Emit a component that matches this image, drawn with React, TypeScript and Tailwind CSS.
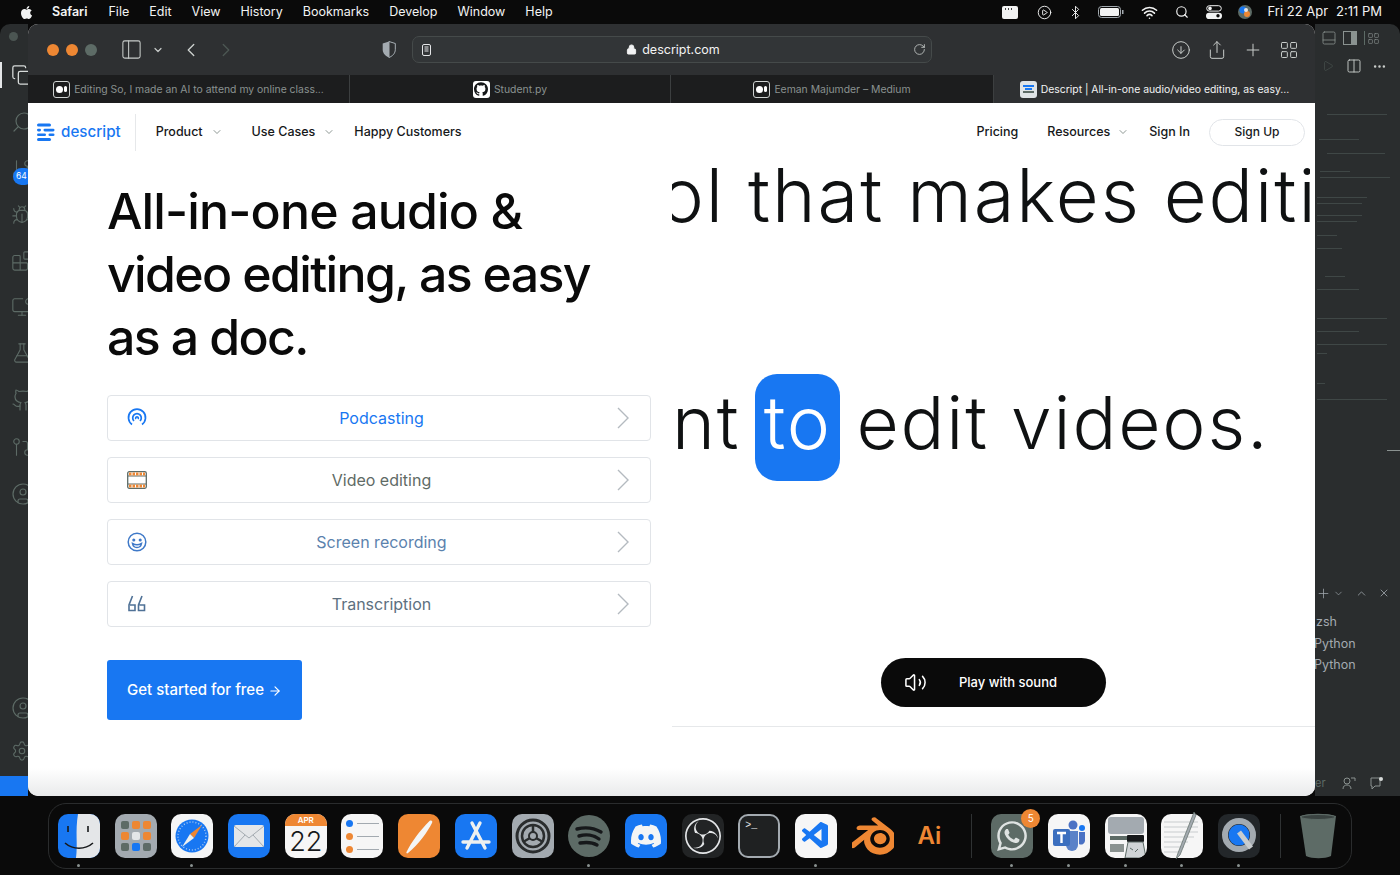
import React from "react";
import { ChevronDown, ChevronLeft, ChevronRight, ChevronUp, Lock, RotateCw, ArrowDownCircle, Share, Plus, LayoutGrid, PanelLeft, Copy, Search, GitBranch, Bug, Blocks, MonitorDot, FlaskConical, Github, GitPullRequest, CircleUser, Settings, X, Play, Columns2, Ellipsis, PanelBottom, Volume2, Search as Mag, Wifi, Bluetooth, CirclePlay, ArrowRight } from "lucide-react";
import { FaApple, FaWhatsapp } from "react-icons/fa";
import { SiDiscord, SiObsstudio, SiBlender, SiGithub } from "react-icons/si";
import { VscVscode } from "react-icons/vsc";

const BLUE = "#1877f2";

function DescriptMark({ size = 18 }: { size?: number }) {
  return (
    <svg width={size} height={size} viewBox="0 0 18 18">
      <g fill="#1877f2">
        <rect x="0" y="0.5" width="14" height="3" rx="1.5" />
        <rect x="0" y="5.800" width="4" height="2.600" rx="1.300" />
        <rect x="6.500" y="5.800" width="11" height="2.600" rx="1.300" />
        <rect x="0" y="10.500" width="9" height="2.600" rx="1.300" />
        <rect x="11.500" y="10.500" width="6" height="2.600" rx="1.300" />
        <rect x="0" y="15" width="14" height="3" rx="1.500" />
      </g>
    </svg>
  );
}

function MediumFav() {
  return (
    <span className="flex h-[17px] w-[17px] items-center justify-center gap-[1px] rounded-[3px] border border-[#cfd3d2] bg-[#1c1d1e]">
      <span className="h-[7px] w-[7px] rounded-full bg-white" />
      <span className="h-[6px] w-[3px] rounded-full bg-white" />
    </span>
  );
}

function Tab({ w, active, icon, label, border = true }: { w: string; active?: boolean; icon: React.ReactNode; label: string; border?: boolean }) {
  return (
    <div className={`${w} flex h-full items-center justify-center gap-1 ${active ? "bg-[#2e3032] text-[#f2f3f3]" : "text-[#8a9290]"} ${border ? "border-r border-[#3c3f40]" : ""}`}>
      {icon}
      <span className="pt-[1px] text-[10.4px] whitespace-nowrap">{label}</span>
    </div>
  );
}

function Row({ icon, label, color }: { icon: React.ReactNode; label: string; color: string }) {
  return (
    <div className="flex h-[46px] w-[544px] items-center rounded-[4px] border border-[#e1e4e8] pl-[19px] pr-5">
      <span className="flex h-5 w-5 items-center justify-center">{icon}</span>
      <span className={`flex-1 text-center text-[16px] ${color}`}>{label}</span>
      <svg width="14" height="24" viewBox="0 0 14 24" fill="none" stroke="#b4bac0" strokeWidth="1.4"><path d="M2 2l10 10L2 22" /></svg>
    </div>
  );
}

function DockTile({ bg = "", children, dot = false }: { bg?: string; children: React.ReactNode; dot?: boolean }) {
  return (
    <div className="relative h-[44px] w-[42px] shrink-0">
      <div className={`flex h-full w-full items-center justify-center overflow-hidden rounded-[10px] ${bg}`}>{children}</div>
      {dot && <span className="absolute -bottom-[9px] left-[19px] h-[3px] w-[3px] rounded-full bg-[#8a9290]" />}
    </div>
  );
}

function Dock() {
  return (
    <div className="flex h-[66px] w-[1304px] items-center rounded-[18px] border border-[#2a2c2d] pl-[9px]">
      <div className="flex items-center gap-[14.7px]">
        <DockTile dot bg="bg-[#1877f2]">
          <svg width="42" height="44" viewBox="0 0 42 44">
            <path d="M20 0H42V44H18C20 30 17 18 20 0Z" fill="#e4e6e8" />
            <path d="M10 12v6M30 12v6" stroke="#16181a" strokeWidth="1.6" />
            <path d="M7 29c8 7 20 7 28 0" stroke="#16181a" strokeWidth="1.6" fill="none" />
          </svg>
        </DockTile>
        <DockTile bg="bg-[#a3aab0]">
          <div className="grid grid-cols-3 gap-[3px]">
            {["#5d6b66", "#ee8733", "#ee8733", "#ee8733", "#e4e6e8", "#ee8733", "#5d6b66", "#1877f2", "#5d6b66"].map((c, i) => (
              <span key={i} className="h-[8px] w-[8px] rounded-[2px]" style={{ backgroundColor: c }} />
            ))}
          </div>
        </DockTile>
        <DockTile dot bg="bg-[#f4f5f5]">
          <svg width="36" height="36" viewBox="0 0 36 36">
            <circle cx="18" cy="18" r="16.500" fill="#1877f2" />
            <circle cx="18" cy="18" r="14" fill="none" stroke="#a8c8f0" strokeWidth="1.500" strokeDasharray="1 2" />
            <path d="M28 7L20 20 16 16Z" fill="#ee8733" />
            <path d="M8 29l8-13 4 4Z" fill="#eef0f0" />
          </svg>
        </DockTile>
        <DockTile bg="bg-[#1877f2]">
          <svg width="32" height="24" viewBox="0 0 32 24">
            <rect x="1" y="1" width="30" height="22" rx="2" fill="#e4e6e8" />
            <path d="M1 2l15 12L31 2M1 23l11-12M31 23L20 11" stroke="#a3aab0" fill="none" />
          </svg>
        </DockTile>
        <DockTile bg="bg-[#f6f6f6]">
          <div className="flex h-full w-full flex-col items-center">
            <div className="flex h-[12px] w-full items-center justify-center bg-[#ee8733] text-[8px] font-semibold text-white">APR</div>
            <div className="text-[27px] leading-[32px] font-light text-[#16181a]">22</div>
          </div>
        </DockTile>
        <DockTile bg="bg-[#f6f6f6]">
          <div className="flex flex-col gap-[6px]">
            {["#1877f2", "#ee8733", "#ee8733"].map((c, i) => (
              <div key={i} className="flex items-center gap-[4px]">
                <span className="h-[7px] w-[7px] rounded-full" style={{ backgroundColor: c }} />
                <span className="h-[1px] w-[22px] bg-[#a3aab0]" />
              </div>
            ))}
          </div>
        </DockTile>
        <DockTile bg="bg-[#ee8733]">
          <svg width="42" height="44" viewBox="0 0 42 44"><path d="M34 9c-4 8-13 21-24 30-1 1-2 0-1.500-1 5-10 13-21 23-31 2-1 3.500 0 2.500 2Z" fill="#f4f5f5" /></svg>
        </DockTile>
        <DockTile bg="bg-[#1877f2]">
          <svg width="36" height="36" viewBox="0 0 36 36" stroke="#eef0f0" strokeWidth="3.400" strokeLinecap="round"><path d="M22 5L9 30M14 5l13 25M5 24h26" /></svg>
        </DockTile>
        <DockTile bg="bg-[#a3aab0]">
          <svg width="38" height="38" viewBox="0 0 38 38" fill="none" stroke="#2a2d2e">
            <circle cx="19" cy="19" r="16" strokeWidth="3" />
            <circle cx="19" cy="19" r="11" strokeWidth="2.500" />
            <circle cx="19" cy="19" r="4" strokeWidth="2" />
            <path d="M19 8v7M9 25l7-4M29 25l-7-4" strokeWidth="2.500" />
          </svg>
        </DockTile>
        <DockTile dot>
          <svg width="42" height="44" viewBox="0 0 42 44">
            <circle cx="21" cy="22" r="21" fill="#5d6b66" />
            <g fill="none" stroke="#16181a" strokeWidth="3.400" strokeLinecap="round">
              <path d="M9 15c8-2 17-1 24 3" />
              <path d="M11 22c7-2 15-1 20 3" />
              <path d="M12 29c6-1 12-1 17 2" />
            </g>
          </svg>
        </DockTile>
        <DockTile bg="bg-[#1877f2]"><SiDiscord size={30} color="#f4f5f5" /></DockTile>
        <DockTile bg="bg-[#222425]"><SiObsstudio size={36} color="#e4e6e8" /></DockTile>
        <DockTile bg="bg-[#1f2122] border-2 border-[#a3aab0]">
          <div className="h-full w-full px-[5px] pt-[5px] font-['Liberation_Mono',monospace] text-[10px] leading-[10px] text-[#e4e6e8]">&gt;_</div>
        </DockTile>
        <DockTile dot bg="bg-[#f6f6f6]"><VscVscode size={32} color={BLUE} /></DockTile>
        <DockTile><SiBlender size={46} color="#ee8733" className="shrink-0" /></DockTile>
        <DockTile><span className="font-['Inter',sans-serif] text-[24px] font-semibold text-[#ee8733]">Ai</span></DockTile>
      </div>
      <span className="ml-[21px] mr-[19px] h-[44px] w-px bg-[#2f3233]" />
      <div className="flex items-center gap-[14.7px]">
        <div className="relative">
          <DockTile dot bg="bg-[#5d6b66]"><FaWhatsapp size={34} color="#dfe3e2" /></DockTile>
          <span className="absolute -top-[5px] -right-[7px] flex h-[19px] w-[19px] items-center justify-center rounded-full bg-[#ee8733] text-[10px] text-white">5</span>
        </div>
        <DockTile dot bg="bg-[#f6f6f6]">
          <svg width="34" height="34" viewBox="0 0 34 34">
            <circle cx="21" cy="6" r="4.500" fill="#4b72c4" />
            <circle cx="30" cy="9" r="3" fill="#1877f2" />
            <path d="M15 12h11v14a6 6 0 01-12 0Z" fill="#5b82c8" />
            <path d="M27 13h6v9a4 4 0 01-6 3Z" fill="#4b72c4" />
            <rect x="1" y="10" width="17" height="17" rx="2" fill="#3b6fbf" />
            <path d="M5 14h9M9.500 14v10" stroke="#fff" strokeWidth="2.400" />
          </svg>
        </DockTile>
        <DockTile dot bg="bg-[#f6f6f6]">
          <svg width="42" height="44" viewBox="0 0 42 44">
            <rect x="3" y="3" width="36" height="17" rx="3" fill="#a3aab0" />
            <rect x="5" y="22" width="18" height="4" fill="#5d6b66" />
            <rect x="5" y="30" width="14" height="8" fill="#8a9290" />
            <rect x="22" y="21" width="17" height="7" rx="1" fill="#16181a" />
            <path d="M23 28h15l3 16H20Z" fill="#d0d4d6" stroke="#5d6b66" />
            <path d="M25 34l3 2M30 38l3-3" stroke="#5d6b66" />
          </svg>
        </DockTile>
        <div className="relative">
          <DockTile dot bg="bg-[#f6f6f6]">
            <svg width="42" height="44" viewBox="0 0 42 44">
              <path d="M3 8h34M3 13h34M3 18h34M3 23h30M3 28h24M3 33h20M3 38h16" stroke="#c8ccce" />
            </svg>
          </DockTile>
          <svg width="22" height="50" viewBox="0 0 22 50" className="absolute -top-[3px] left-[14px]">
            <path d="M19 1L3 42 1 48 5 44 21 4Z" fill="#a3aab0" stroke="#5d6b66" strokeWidth=".7" />
          </svg>
        </div>
        <DockTile dot bg="bg-[#23272a]">
          <svg width="40" height="42" viewBox="0 0 40 42" fill="none">
            <circle cx="20" cy="20" r="14" stroke="#a3aab0" strokeWidth="6" />
            <circle cx="20" cy="20" r="10.500" fill={BLUE} />
            <path d="M20 17l12 16" stroke="#c8ccce" strokeWidth="5" />
          </svg>
        </DockTile>
      </div>
      <span className="ml-[20px] mr-[19px] h-[44px] w-px bg-[#2f3233]" />
      <svg width="36" height="46" viewBox="0 0 36 46">
        <path d="M0 3c10-3 26-3 36 0l-5 40c-6 3-19 3-25 0Z" fill="#5d6b66" />
        <ellipse cx="18" cy="4" rx="17" ry="2.500" fill="#3a4341" stroke="#5d6b66" />
      </svg>
    </div>
  );
}

const codeLines: [number, number, number][] = [
  [40, 12, 60], [24, 4, 40], [13, 12, 58], [17, 5, 30], [5, 5, 70], [19, 2, 50], [5, 2, 45], [11, 2, 45],
  [5, 2, 40], [13, 2, 20], [12, 2, 25], [27, 10, 20], [12, 2, 42], [28, 2, 70], [12, 2, 42], [12, 2, 70],
  [8, 2, 10], [29, 2, 8], [15, 2, 70],
];

export default function App() {
  return (
    <div className="flex h-[875px] w-[1400px] flex-col overflow-hidden bg-[#0a0a0a] font-['Inter',sans-serif]">
      {/* Menu bar */}
      <div className="flex h-6 shrink-0 items-center justify-between pl-[19px] pr-[18px] text-[12.5px] text-[#f2f3f3]">
        <div className="flex items-center">
          <FaApple size={15} className="mr-[18px]" />
          <span className="mr-[21px] font-semibold">Safari</span>
          <div className="flex gap-[20px]">
            <span>File</span><span>Edit</span><span>View</span><span>History</span><span>Bookmarks</span><span>Develop</span><span>Window</span><span>Help</span>
          </div>
        </div>
        <div className="flex items-center">
          <svg width="16" height="13" viewBox="0 0 16 13" className="mr-[19px]"><rect width="16" height="13" rx="2" fill="#f2f3f3" /><path d="M3 3h1M6 3h1M9 3h1" stroke="#0a0a0a" strokeWidth="1.500" /></svg>
          <CirclePlay size={15} strokeWidth={1.500} className="mr-[16px]" />
          <Bluetooth size={15} strokeWidth={1.500} className="mr-[15px]" />
          <svg width="26" height="12" viewBox="0 0 26 12" className="mr-[17px]"><rect x=".5" y=".5" width="22" height="11" rx="3" fill="none" stroke="#a3aab0" /><rect x="2" y="2" width="19" height="8" rx="1.500" fill="#f2f3f3" /><rect x="24" y="4" width="1.500" height="4" fill="#a3aab0" /></svg>
          <Wifi size={17} strokeWidth={2.200} className="mr-[17px]" />
          <Mag size={14} strokeWidth={2} className="mr-[17px]" />
          <svg width="16" height="14" viewBox="0 0 16 14" className="mr-[16px]"><rect x=".7" y=".7" width="14.600" height="5.400" rx="2.700" fill="none" stroke="#f2f3f3" /><circle cx="4" cy="3.400" r="1.800" fill="#f2f3f3" /><rect y="7.700" width="16" height="6.300" rx="3.100" fill="#f2f3f3" /><circle cx="12" cy="10.800" r="1.700" fill="#0a0a0a" /></svg>
          <svg width="14" height="14" viewBox="0 0 14 14" className="mr-[16px]"><circle cx="7" cy="7" r="7" fill="#5d6b66" /><circle cx="5" cy="5" r="3.500" fill="#1877f2" /><circle cx="9" cy="9" r="3" fill="#ee8733" /><circle cx="8" cy="5" r="2" fill="#e4e6e8" /></svg>
          <span className="mr-[8px] text-[13px]">Fri 22 Apr</span>
          <span className="text-[13px]">2:11 PM</span>
        </div>
      </div>

      {/* Desktop */}
      <div className="flex h-[772px] shrink-0">
        {/* VS Code left rail */}
        <div className="relative flex w-[28px] shrink-0 flex-col items-start overflow-hidden rounded-tl-[10px] bg-[#2a2d2e] text-[#5d6b66]">
          <span className="absolute left-0 top-[38px] h-[26px] w-[2px] bg-[#e4e6e8]" />
          <div className="flex h-[40px] w-full shrink-0 items-start pl-[9px] pt-[8px]"><span className="h-[9px] w-[9px] rounded-full bg-[#4b5552]" /></div>
          <div className="flex flex-col gap-[24px] pl-[11px]">
            <Copy size={22} strokeWidth={1.400} className="shrink-0 text-[#d7dbda]" />
            <Search size={24} strokeWidth={1.200} className="shrink-0 -scale-x-100" />
            <GitBranch size={22} strokeWidth={1.200} className="shrink-0" />
            <Bug size={22} strokeWidth={1.200} className="shrink-0" />
            <Blocks size={22} strokeWidth={1.200} className="shrink-0" />
            <MonitorDot size={22} strokeWidth={1.200} className="shrink-0" />
            <FlaskConical size={22} strokeWidth={1.200} className="shrink-0" />
            <Github size={24} strokeWidth={1.200} className="shrink-0" />
            <GitPullRequest size={22} strokeWidth={1.200} className="shrink-0" />
            <CircleUser size={24} strokeWidth={1.200} className="shrink-0" />
          </div>
          <span className="absolute left-[13px] top-[144px] flex h-[17px] w-[20px] items-center rounded-full bg-[#1877f2] pl-[3px] text-[8.500px] text-white">64</span>
          <div className="mt-auto flex flex-col gap-[20px] pl-[11px]">
            <CircleUser size={24} strokeWidth={1.200} />
            <Settings size={22} strokeWidth={1.200} />
          </div>
          <div className="mt-[14px] h-[20px] w-full shrink-0 bg-[#1877f2]" />
        </div>

        {/* Safari */}
        <div className="relative z-10 flex w-[1287px] shrink-0 flex-col overflow-hidden rounded-[10px] bg-white">
          <div className="relative flex h-[51px] shrink-0 items-center bg-[#2e3032] pl-[19px] text-[#c8ccca]">
            <span className="h-[12px] w-[12px] rounded-full bg-[#ee8733]" />
            <span className="ml-[7px] h-[12px] w-[12px] rounded-full bg-[#ee8733]" />
            <span className="ml-[7px] h-[12px] w-[12px] rounded-full bg-[#5d6b66]" />
            <PanelLeft size={23} strokeWidth={1.100} className="ml-[23px]" />
            <ChevronDown size={12} strokeWidth={2.400} className="ml-[9px]" />
            <ChevronLeft size={22} strokeWidth={1.500} className="ml-[16px]" />
            <ChevronRight size={22} strokeWidth={1.500} className="ml-[13px] text-[#4b5552]" />
            <svg width="14" height="17" viewBox="0 0 14 17" className="ml-[145px]"><path d="M7 .5l6.300 2v6c0 4-3 6.700-6.300 8C3.700 15.200.7 12.500.7 8.500v-6Z" fill="#a3aab0" /><path d="M7 .5l6.300 2v6c0 4-3 6.700-6.300 8Z" fill="#2e3032" stroke="#a3aab0" /></svg>
            <div className="ml-[16px] flex h-[27px] w-[520px] items-center rounded-[7px] border border-[#454a4a] bg-[#323537] pl-[9px] pr-[5px]">
              <svg width="9" height="12" viewBox="0 0 9 12" fill="none" stroke="#e4e6e8"><rect x=".5" y=".5" width="8" height="11" rx="1.500" /><path d="M2.500 3h4M2.500 5h4M2.500 7h4" /></svg>
              <div className="flex flex-1 items-center justify-center gap-[5px] pl-[2px] text-[12.500px] text-[#f2f3f3]">
                <Lock size={11} fill="#f2f3f3" strokeWidth={2} />
                <span className="pt-[1px]">descript.com</span>
              </div>
              <RotateCw size={13} strokeWidth={1.500} />
            </div>
            <ArrowDownCircle size={20} strokeWidth={1.200} className="ml-[239px]" />
            <Share size={20} strokeWidth={1.200} className="ml-[16px]" />
            <Plus size={20} strokeWidth={1.200} className="ml-[16px]" />
            <LayoutGrid size={20} strokeWidth={1.200} className="ml-[16px]" />
          </div>
          <div className="flex h-[28px] shrink-0 items-center bg-[#1c1d1e]">
            <Tab w="w-[322px]" icon={<MediumFav />} label="Editing So, I made an AI to attend my online class..." />
            <Tab w="w-[321px]" icon={<span className="flex h-[17px] w-[17px] items-center justify-center rounded-[3px] bg-white"><SiGithub size={14} color="#16181a" /></span>} label="Student.py" />
            <Tab w="w-[323px]" icon={<MediumFav />} label="Eeman Majumder – Medium" />
            <Tab w="w-[321px]" active border={false} icon={<span className="flex h-[17px] w-[17px] flex-col items-center justify-center gap-[1px] rounded-[3px] bg-[#dfe3e6]"><span className="h-[2px] w-[11px] bg-[#1877f2]" /><span className="h-[2px] w-[7px] bg-[#1877f2]" /><span className="h-[2px] w-[11px] bg-[#5d6b66]" /></span>} label="Descript | All-in-one audio/video editing, as easy..." />
          </div>

          {/* Page */}
          <div className="flex min-h-0 flex-1 flex-col">
            <div className="flex h-[57px] shrink-0 items-center pt-[1px] text-[12.500px] font-medium text-[#16181a]">
              <div className="ml-[9px] flex items-center gap-[6px] pr-[14px]">
                <DescriptMark />
                <span className="text-[15.200px] font-medium text-[#1877f2]">descript</span>
              </div>
              <span className="h-[37px] w-px bg-[#e6e8ea]" />
              <span className="ml-[20px]">Product</span>
              <ChevronDown size={12} strokeWidth={1.400} className="ml-[8px] text-[#5d6b66]" />
              <span className="ml-[29px]">Use Cases</span>
              <ChevronDown size={12} strokeWidth={1.400} className="ml-[8px] text-[#5d6b66]" />
              <span className="ml-[19px]">Happy Customers</span>
              <span className="ml-auto">Pricing</span>
              <span className="ml-[29px]">Resources</span>
              <ChevronDown size={12} strokeWidth={1.400} className="ml-[7px] text-[#5d6b66]" />
              <span className="ml-[20px]">Sign In</span>
              <span className="ml-[19px] mr-[10px] flex h-[27px] w-[96px] items-center justify-center rounded-full border border-[#e1e4e8] text-[12px]">Sign Up</span>
            </div>

            <div className="flex min-h-0 flex-1">
              <div className="w-[644px] shrink-0 pl-[79px] pt-[20px]">
                <h1 className="text-[50px] leading-[63px] font-medium tracking-[-0.033em] text-[#0a0a0a]">
                  <span className="tracking-[-0.017em]">All-in-one audio &amp;</span><br />video editing, as easy<br />as a doc.
                </h1>
                <div className="mt-[26px] flex flex-col gap-[16px]">
                  <Row color="text-[#1877f2]" label="Podcasting" icon={
                    <svg width="20" height="20" viewBox="0 0 20 20" fill="none" stroke="#1877f2" strokeWidth="1.700"><path d="M5 16.500a8.500 8.500 0 1 1 10 0" /><path d="M7 13a4.300 4.300 0 1 1 6 0" /><path d="M9 11a1.300 1.300 0 1 1 2 0" /></svg>
                  } />
                  <Row color="text-[#5f6b66]" label="Video editing" icon={
                    <svg width="20" height="20" viewBox="0 0 20 20" fill="none"><rect x=".7" y="1.700" width="18.600" height="16.600" rx="1.500" stroke="#5d6b66" strokeWidth="1.300" /><path d="M1 6h18M1 14h18" stroke="#5d6b66" /><path d="M2 4h16M2 16h16" stroke="#ee8733" strokeWidth="3" strokeDasharray="2.500 1" /></svg>
                  } />
                  <Row color="text-[#5b82ad]" label="Screen recording" icon={
                    <svg width="20" height="20" viewBox="0 0 20 20" fill="none" stroke="#3f79c8" strokeWidth="1.500"><circle cx="10" cy="10" r="8.800" /><circle cx="6.800" cy="8" r=".8" fill="#3f79c8" /><circle cx="13.200" cy="8" r=".8" fill="#3f79c8" /><path d="M5.500 11.500c2.500 1.500 6.500 1.500 9 0-.5 3-2.500 4-4.500 4s-4-1-4.500-4Z" /></svg>
                  } />
                  <Row color="text-[#5d7080]" label="Transcription" icon={
                    <svg width="20" height="20" viewBox="0 0 20 20" fill="none" stroke="#4f7196" strokeWidth="1.600"><path d="M5.500 2L2 11v5.500h6V11H3M15 2l-3.500 9v5.500h6V11h-5" /></svg>
                  } />
                </div>
                <button className="mt-[33px] flex h-[60px] w-[195px] items-center justify-center gap-[4px] rounded-[3px] bg-[#1877f2] pt-[1px] text-[15px] font-medium text-white">
                  Get started for free
                  <ArrowRight size={14} strokeWidth={2} />
                </button>
              </div>

              <div className="flex min-w-0 flex-1 flex-col">
                <div className="mr-[5px] h-[72px] overflow-hidden whitespace-nowrap text-[74px] leading-[70px] font-light tracking-[0.027em] text-[#0f1112]">
                  <span className="-ml-[12px] inline-block">ol that makes editing</span>
                </div>
                <div className="mt-[142px] flex h-[107px] items-center whitespace-nowrap text-[73px] font-light tracking-[0.025em] text-[#0f1112]">
                  <span className="pb-[10px]">nt</span>
                  <span className="ml-[15px] flex h-[107px] w-[85px] items-center justify-center rounded-[22px] bg-[#1877f2] pb-[10px] text-white">to</span>
                  <span className="ml-[16px] pb-[10px]">edit videos.</span>
                </div>
                <div className="mt-[177px] ml-[209px] flex h-[49px] w-[225px] items-center rounded-full bg-[#0a0a0a] pl-[23px] text-[13px] font-medium text-white">
                  <Volume2 size={23} strokeWidth={1.600} />
                  <span className="ml-[32px]">Play with sound</span>
                </div>
                <div className="mt-[19px] h-px w-full bg-[#e6e8ea]" />
              </div>
            </div>
            <div className="h-[28px] shrink-0 bg-gradient-to-b from-white to-[#e9eaeb]" />
          </div>
        </div>

        {/* VS Code right part */}
        <div className="flex min-w-0 flex-1 flex-col overflow-hidden rounded-tr-[10px] bg-[#2a2d2e] text-[#8a9290]">
          <div className="mt-[6px] flex h-[16px] items-center pl-[6px]">
            <PanelBottom size={16} strokeWidth={1.200} className="shrink-0" />
            <svg width="14" height="14" viewBox="0 0 14 14" className="ml-[6px] shrink-0"><rect x=".5" y=".5" width="13" height="13" fill="none" stroke="#8a9290" /><rect x="8" y="1" width="5" height="12" fill="#8a9290" /></svg>
            <span className="ml-[7px] h-[14px] w-px shrink-0 bg-[#5d6b66]" />
            <LayoutGrid size={13} strokeWidth={1.200} className="ml-[2px] shrink-0" />
          </div>
          <div className="mt-[12px] flex h-[16px] items-center pl-[7px]">
            <Play size={12} strokeWidth={1.200} className="shrink-0 text-[#4b5552]" />
            <Columns2 size={16} strokeWidth={1.400} className="ml-[12px] shrink-0 text-[#c8ccca]" />
            <Ellipsis size={15} className="ml-[10px] shrink-0 text-[#c8ccca]" />
          </div>
          <div className="h-[512px] shrink-0">
            {codeLines.map(([mt, ml, w], i) => (
              <div key={i} className="h-px bg-[#3f4746]" style={{ marginTop: mt, marginLeft: ml, width: w }} />
            ))}
            <div className="mt-[50px] ml-[72px] h-px w-[13px] bg-[#8a9290]" />
          </div>
          <div className="flex h-[14px] items-center pl-[1px] text-[#a3aab0]">
            <Plus size={15} strokeWidth={1.200} className="shrink-0" />
            <ChevronDown size={11} strokeWidth={1.400} className="ml-[2px] shrink-0" />
            <ChevronUp size={13} strokeWidth={1.400} className="ml-[11px] shrink-0" />
            <X size={12} strokeWidth={1.600} className="ml-[10px] shrink-0" />
          </div>
          <div className="mt-[11px] flex flex-col text-[12.500px] leading-[21.500px] text-[#a3aab0]">
            <span className="pl-[1px]">zsh</span>
            <span className="-ml-[1px]">Python</span>
            <span className="-ml-[1px]">Python</span>
          </div>
          <div className="mt-auto mb-[5px] flex items-center text-[11px] text-[#5d6b66]">
            <span>er</span>
            <svg width="14" height="14" viewBox="0 0 14 14" className="ml-[16px]" fill="none" stroke="#8a9290"><circle cx="5" cy="5" r="3" /><path d="M1 13c0-3 2-4 4-4s4 1 4 4M9 2h4v3" /></svg>
            <svg width="14" height="14" viewBox="0 0 14 14" className="ml-[14px]" fill="none" stroke="#8a9290"><path d="M1 2h9v8H5l-3 3v-3H1Z" /><circle cx="11" cy="3" r="2" fill="#d7dbda" stroke="none" /></svg>
          </div>
        </div>
      </div>

      {/* Dock */}
      <div className="flex flex-1 items-start pl-[48px] pt-[7px]">
        <Dock />
      </div>
    </div>
  );
}
